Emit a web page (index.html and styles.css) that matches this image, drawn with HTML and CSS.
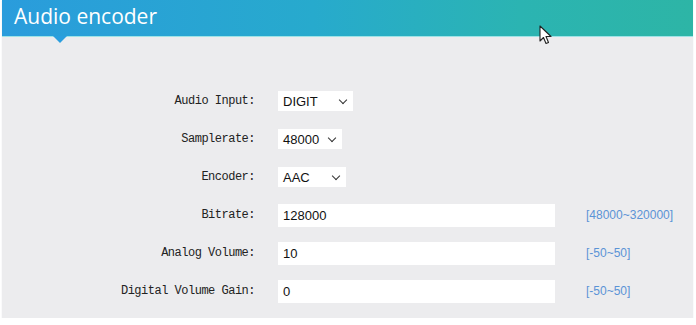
FILE: index.html
```html
<!DOCTYPE html>
<html lang="en">
<head>
  <meta charset="UTF-8" />
  <title>Audio encoder</title>
  <link rel="stylesheet" href="styles.css">
</head>
<body>
  <div class="panel">
    <h1 class="panel-title">Audio encoder</h1>

    <div class="form">
      <label class="label">Audio Input:</label>
      <div class="select w-digit"><span>DIGIT</span><i class="chev"></i></div>
      <span></span>

      <label class="label">Samplerate:</label>
      <div class="select w-rate"><span>48000</span><i class="chev"></i></div>
      <span></span>

      <label class="label">Encoder:</label>
      <div class="select w-enc"><span>AAC</span><i class="chev"></i></div>
      <span></span>

      <label class="label">Bitrate:</label>
      <input class="field" type="text" value="128000" />
      <span class="range">[48000~320000]</span>

      <label class="label">Analog Volume:</label>
      <input class="field" type="text" value="10" />
      <span class="range">[-50~50]</span>

      <label class="label">Digital Volume Gain:</label>
      <input class="field" type="text" value="0" />
      <span class="range">[-50~50]</span>
    </div>

    <svg class="cursor" width="14" height="20" viewBox="0 0 14 20">
      <path d="M1 1 L1 16 L4.5 12.5 L7 18.5 L9.5 17.5 L7 11.5 L12 11.5 Z" fill="#fff" stroke="#222" stroke-width="1.1" stroke-linejoin="round"/>
    </svg>
  </div>
</body>
</html>
```

FILE: styles.css
```css
body {
  margin: 0;
  background-color: #fff;
  font-family: 'Liberation Sans', Arial, sans-serif;
}

.panel {
  position: relative;
  width: 691px;
  margin-left: 2px;
  background-color: #ececee;
  padding-bottom: 16px;
  box-shadow: 0 1px 1px #e2e2e4;
}

.panel-title {
  position: relative;
  margin: 0;
  height: 36px;
  padding-left: 12px;
  border-bottom: 1px solid #9ee3e6;
  background: linear-gradient(to right, #2a9cdc 0%, #27aacd 45%, #2bb4b2 75%, #2db5a6 100%);
  color: #fff;
  font-family: 'Open Sans', sans-serif;
  font-weight: normal;
  font-size: 21px;
  line-height: 33px;
}

.panel-title::after {
  content: "";
  position: absolute;
  left: 51px;
  bottom: -7px;
  border-left: 7px solid transparent;
  border-right: 7px solid transparent;
  border-top: 7px solid #2a9ede;
}

.form {
  display: grid;
  grid-template-columns: 253px 277px auto;
  column-gap: 23px;
  row-gap: 16px;
  grid-auto-rows: 22px;
  align-items: center;
  padding-top: 53px;
}

.form .range {
  margin-left: 8px;
}

.label {
  text-align: right;
  font-family: 'Liberation Mono', 'Courier New', monospace;
  font-size: 12px;
  letter-spacing: -0.5px;
  color: #222;
}

.select {
  display: flex;
  align-items: center;
  justify-content: space-between;
  box-sizing: border-box;
  height: 20px;
  padding: 0 7px 0 5px;
  background-color: #fff;
  font-size: 13px;
  color: #111;
}

.w-digit { width: 75px; }
.w-rate { width: 64px; }
.w-enc { width: 68px; }

.chev {
  width: 5px;
  height: 5px;
  margin-top: -3px;
  border-right: 1.5px solid #333;
  border-bottom: 1.5px solid #333;
  transform: rotate(45deg);
}

.field {
  box-sizing: border-box;
  width: 277px;
  height: 23px;
  margin: 0;
  padding: 0 5px;
  border: none;
  background-color: #fff;
  font-family: 'Liberation Sans', Arial, sans-serif;
  font-size: 13px;
  color: #111;
}

.range {
  font-size: 12px;
  color: #5b93d6;
}

.cursor {
  position: absolute;
  left: 537px;
  top: 25px;
}
```
